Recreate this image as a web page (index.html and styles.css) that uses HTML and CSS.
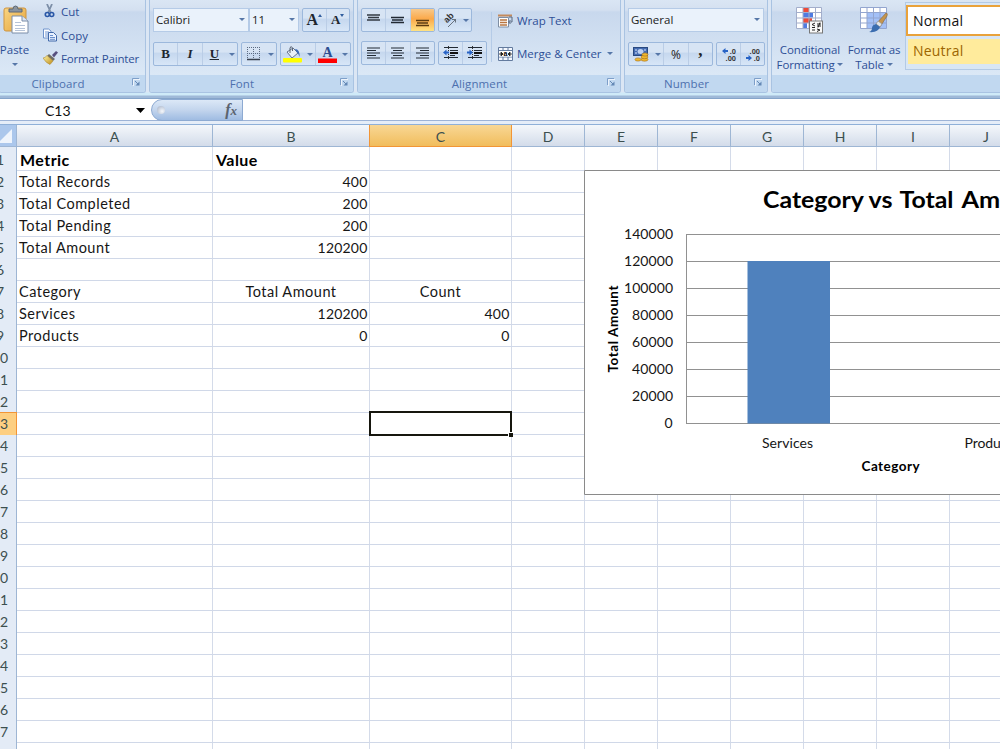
FILE: index.html
```html
<!DOCTYPE html>
<html lang="en">
<head>
<meta charset="utf-8">
<title>Workbook</title>
<link rel="stylesheet" href="styles.css">
</head>
<body>
<svg class="defs" width="0" height="0">
  <defs>
    <symbol id="launch" viewBox="0 0 9 9"><path d="M.5 7V.5H7" fill="none" stroke="#7e9fc9"/><path d="M3 3l3 3" stroke="#6488b5"/><path d="M3.500 7.500h4v-4z" fill="#6488b5"/><path d="M1.500 8V1.500H8" fill="none" stroke="#fff" opacity=".7"/></symbol>
    <linearGradient id="clip" x2="1" y2="1"><stop stop-color="#f9d583"/><stop offset="1" stop-color="#e5a43c"/></linearGradient>
    <linearGradient id="gold" x2="1" y2="1"><stop stop-color="#fff7a8"/><stop offset="1" stop-color="#bd8a18"/></linearGradient>
  </defs>
</svg>
<div class="ribbon">
  <section class="group clipboard">
    <div class="body">
      <div class="paste">
        <svg width="26" height="29" viewBox="0 0 26 29"><rect x="1" y="3" width="22" height="23" rx="2" fill="url(#clip)" stroke="#cf9540"/><path d="M6 7V4h4q0-3 2.500-3t2.500 3h4v3z" fill="#8a949f" stroke="#5e6976"/><path d="M9 11h10l6 5v12H9z" fill="#fff" stroke="#7a8da8"/><path d="M19 11v5h6" fill="#dbe5f3" stroke="#7a8da8"/><path d="M12 17.500h6M12 20.500h10M12 23.500h10M12 25.500h10" stroke="#b5c3d8"/></svg>
        <span>Paste</span><i class="caret"></i>
      </div>
      <div class="commands">
        <div><svg width="14" height="14" viewBox="0 0 14 14"><path d="M4 0l4 9M9 0L5 9" stroke="#7d8fa8" stroke-width="1.800"/><circle cx="4.300" cy="10.500" r="2" fill="none" stroke="#2856a6" stroke-width="1.600"/><circle cx="8.700" cy="10.500" r="2" fill="none" stroke="#2856a6" stroke-width="1.600"/></svg><span>Cut</span></div>
        <div><svg width="14" height="14" viewBox="0 0 14 14"><path d="M.5 1h5l2.500 2v7H.5z" fill="#fff" stroke="#6e93cd"/><path d="M2 4h4M2 6h4M2 8h3" stroke="#7197d4"/><path d="M5.500 4.500h5l3 3v5.500h-8z" fill="#e8f1ff" stroke="#4169aa"/><path d="M7 7.500h3M7 9.500h5M7 11.300h5" stroke="#6a90cc"/></svg><span>Copy</span></div>
        <div><svg width="15" height="14" viewBox="0 0 15 14"><path d="M9 4l4-4 2 1.500-4 5z" fill="#58507f"/><path d="M6 3l6 5-2 2-6-5z" fill="#716e63"/><path d="M4 4.500l6 5.500-3 3.500Q3 12 0 7q2 0 4-2.500z" fill="url(#gold)" stroke="#ac8937" stroke-width=".6"/></svg><span class="painter">Format Painter</span></div>
      </div>
    </div>
    <footer><span>Clipboard</span><svg class="launch"><use href="#launch"/></svg></footer>
  </section>

  <section class="group font">
    <div class="body rows">
      <div class="row">
        <div class="combo name"><span>Calibri</span><i class="caret"></i></div>
        <div class="combo size"><span>11</span><i class="caret"></i></div>
        <div class="set sizes"><b class="serif big">A<i class="up"></i></b><b class="serif">A<i class="down"></i></b></div>
      </div>
      <div class="row second">
        <div class="set biu"><b class="serif">B</b><b class="serif ital">I</b><b class="serif under">U</b><i class="caret"></i></div>
        <div class="set borders"><b><svg width="13" height="14" viewBox="0 0 13 14"><path d="M.5 0v12M6.500 0v12M12.500 0v12M0 .5h13M0 6.500h13" stroke="#5c6b82" stroke-dasharray="1 1"/><path d="M0 12.500h13" stroke="#38424f" stroke-width="1.400"/></svg></b><i class="caret"></i></div>
        <div class="set colors"><b><svg width="19" height="17" viewBox="0 0 19 17"><path d="M4 6l6-4 5 5-6 5z" fill="#e9f0f9" stroke="#66758c"/><path d="M7 7V2q1-3 2.500 0v3" fill="none" stroke="#5b6575"/><path d="M12 3q5 0 4.500 8-1-4-3-5z" fill="#3d6cb8"/><rect y="12" width="19" height="4.600" rx="1" fill="#ff0"/></svg></b><i class="caret"></i><b><svg width="19" height="17" viewBox="0 0 19 17"><text x="9.500" y="11" text-anchor="middle" class="fontcolor">A</text><rect y="12.500" width="19" height="4.500" fill="#f00"/></svg></b><i class="caret"></i></div>
      </div>
    </div>
    <footer><span>Font</span><svg class="launch"><use href="#launch"/></svg></footer>
  </section>

  <section class="group alignment">
    <div class="body">
      <div class="rows">
        <div class="row">
          <div class="set three">
            <b><svg width="13" height="16"><path d="M0 3h13M1 5.500h11M0 8h13" stroke="#333a43" stroke-width="1.300"/></svg></b>
            <b><svg width="13" height="16"><path d="M0 5.500h13M1 8h11M0 10.500h13" stroke="#222a34" stroke-width="1.300"/></svg></b>
            <b class="on"><svg width="13" height="16"><path d="M0 8.500h13M1 11h11M0 13.500h13" stroke="#5a3b12" stroke-width="1.300"/></svg></b>
          </div>
          <div class="set orient"><b><svg width="16" height="16" viewBox="0 0 16 16"><text class="ab" transform="translate(5 11.500) rotate(-45)">ab</text><path d="M6 15l7-7M13.500 7v3.500M10 7.500h4" stroke="#68727e" fill="none"/></svg></b><i class="caret"></i></div>
        </div>
        <div class="row second up1">
          <div class="set three">
            <b><svg width="13" height="12"><path d="M0 1h13M0 3.500h9M0 6h13M0 8.500h9M0 11h13" stroke="#222a34" stroke-width="1.200"/></svg></b>
            <b><svg width="13" height="12"><path d="M0 1h13M2 3.500h9M0 6h13M2 8.500h9M0 11h13" stroke="#222a34" stroke-width="1.200"/></svg></b>
            <b><svg width="13" height="12"><path d="M0 1h13M4 3.500h9M0 6h13M4 8.500h9M0 11h13" stroke="#222a34" stroke-width="1.200"/></svg></b>
          </div>
          <div class="set indent">
            <b><svg width="15" height="14"><path d="M1 1.500h14M7 4.500h8M7 9.500h5M1 11.500h14" stroke="#222a34" stroke-width="1.200"/><path d="M7 7h8" stroke="#111" stroke-width="2"/><path d="M5.500 0v14" stroke="#333" stroke-dasharray="1 1"/><path d="M0 6.500l3.500-3v2H6v2H3.500v2z" fill="#2763c6"/></svg></b>
            <b><svg width="15" height="14"><path d="M1 1.500h14M7 4.500h8M7 9.500h5M1 11.500h14" stroke="#222a34" stroke-width="1.200"/><path d="M7 7h8" stroke="#111" stroke-width="2"/><path d="M5.500 0v14" stroke="#333" stroke-dasharray="1 1"/><path d="M6 6.500l-3.500-3v2H0v2h2.500v2z" fill="#2763c6"/></svg></b>
          </div>
        </div>
      </div>
      <div class="wraps">
        <div><svg width="15" height="14" viewBox="0 0 15 14"><path d="M0 1.500h14" stroke="#c48a5c" stroke-width="2"/><path d="M.5 3.500h10v9.500H.5z" fill="#fff" stroke="#7f8ea4"/><path d="M2 6h7M2 8.500h7M2 11h7" stroke="#b87542" stroke-width="1.300"/><path d="M11 3h3v5h-3M12.500 6l-2 2 2 2" fill="none" stroke="#57677f"/></svg><span>Wrap Text</span></div>
        <div><svg width="15" height="14" viewBox="0 0 15 14"><path d="M.5.5h14v13H.5zM5 .5v3M10 .5v3M5 10v3.500M10 10v3.500M0 3.500h15M0 10h15" fill="#f4f8ff" stroke="#637b9e"/><path d="M1 4h13v5.500H1z" fill="#fff"/><path d="M1 7h4M10 7h4M3 5l2 2-2 2zM12 5l-2 2 2 2z" stroke="#222" fill="#222" stroke-width=".8"/><text x="7.500" y="9" text-anchor="middle" class="tiny">a</text></svg><span>Merge &amp; Center</span><i class="caret"></i></div>
      </div>
    </div>
    <footer><span>Alignment</span><svg class="launch"><use href="#launch"/></svg></footer>
  </section>

  <section class="group number">
    <div class="body rows">
      <div class="row"><div class="combo general"><span>General</span><i class="caret"></i></div></div>
      <div class="row second">
        <div class="set money"><b><svg width="16" height="15" viewBox="0 0 16 15"><rect x=".5" y=".5" width="14" height="8" fill="#446bb1" stroke="#294980"/><ellipse cx="7.500" cy="4.500" rx="3" ry="2.500" fill="#bbd0f2"/><path d="M2 3h2M11 3h2M2 6h2" stroke="#d9e6fc"/><g fill="#efb72e" stroke="#aa721b" stroke-width=".6"><ellipse cx="11.500" cy="12.500" rx="3.500" ry="1.700"/><ellipse cx="11.500" cy="10" rx="3.500" ry="1.700"/><ellipse cx="12" cy="7.500" rx="3" ry="1.600"/><ellipse cx="5" cy="12.500" rx="3" ry="1.600"/></g></svg></b><i class="caret"></i><b class="pct">%</b><b class="comma">,</b></div>
        <div class="set decimals">
          <b><svg width="16" height="15" viewBox="0 0 16 15"><text class="dec" x="15" y="6.500" text-anchor="end">.0</text><text class="dec" x="15" y="14" text-anchor="end">.00</text><path d="M1 4l3.500-3v2H7v2H4.500v2z" fill="#2763c6"/></svg></b>
          <b><svg width="16" height="15" viewBox="0 0 16 15"><text class="dec" x="15" y="6.500" text-anchor="end">.00</text><text class="dec" x="15" y="14" text-anchor="end">.0</text><path d="M7 11l-3.500-3v2H1v2h2.500v2z" fill="#2763c6"/></svg></b>
        </div>
      </div>
    </div>
    <footer><span>Number</span><svg class="launch"><use href="#launch"/></svg></footer>
  </section>

  <section class="group styles">
    <div class="body">
      <div class="large cond">
        <svg width="28" height="27" viewBox="0 0 28 27"><path d="M.5.5h25v21H.5z" fill="#fff"/><path d="M7 .5h6v5H7zM7 11h9v5H7z" fill="#ee4a37"/><path d="M7 5.500h10v5H7zM7 16h4v5.500H7z" fill="#507be0"/><path d="M.5.5h25v21H.5zM7 .5v21M13 .5v21M19.500 .5v21M0 5.500h25M0 11h25M0 16h25" fill="none" stroke="#a3aecb"/><rect x="13.500" y="14" width="13" height="12" fill="#fafafa" stroke="#777"/><path d="M19 16l-3 1.500 3 1.500M16 20.500h3M16 23h3M21 17h4M21 19h4M24 15.500l-2 5M21 22l3 1-3 1.500" fill="none" stroke="#222"/></svg>
        <span>Conditional</span><span>Formatting <i class="caret"></i></span>
      </div>
      <div class="large ftable">
        <svg width="28" height="27" viewBox="0 0 28 27"><path d="M.5.5h26v21H.5z" fill="#fff"/><path d="M7 6h19.500v15.500H7z" fill="#a3c0f7"/><path d="M.5.5h26v21H.5zM7 .5v21M13.500 .5v21M20 .5v21M0 5.500h26M0 11h26M0 16h26" fill="none" stroke="#93a5cf"/><path d="M26 6q2 0 1 3l-7 11-4-3z" fill="#c5954e" stroke="#86673f" stroke-width=".6"/><path d="M18 14l4 3-2 3-4-3z" fill="#e2e5e9" stroke="#858b94" stroke-width=".6"/><path d="M16 17l4 3q-2 6-11 5 3-1 3-4 0-3 4-4z" fill="#3b6db0"/></svg>
        <span>Format as</span><span>Table <i class="caret"></i></span>
      </div>
      <div class="gallery"><div class="normal">Normal</div><div class="neutral">Neutral</div></div>
    </div>
    <footer></footer>
  </section>
</div>

<div class="formula">
  <div class="namebox"><span>C13</span><svg width="9" height="5"><path d="M0 0h9L4.500 5z" fill="#000"/></svg></div>
  <div class="fx"><i class="knob"></i><span>f<small>x</small></span></div>
  <div class="input"></div>
</div>

<main class="sheet">
  <div class="heads">
    <div class="corner"><svg width="16" height="21"><path d="M12 4v14H-2z" fill="#eef4fc"/></svg></div>
    <div>A</div><div>B</div><div class="sel">C</div><div>D</div><div>E</div><div>F</div><div>G</div><div>H</div><div>I</div><div>J</div>
  </div>
  <div class="cells">
    <div class="line first"><i>1</i><strong>Metric</strong><strong>Value</strong></div>
    <div class="line"><i>2</i><span>Total Records</span><span class="r">400</span></div>
    <div class="line"><i>3</i><span>Total Completed</span><span class="r">200</span></div>
    <div class="line"><i>4</i><span>Total Pending</span><span class="r">200</span></div>
    <div class="line"><i>5</i><span>Total Amount</span><span class="r">120200</span></div>
    <div class="line"><i>6</i></div>
    <div class="line"><i>7</i><span>Category</span><span class="c">Total Amount</span><span class="c">Count</span></div>
    <div class="line"><i>8</i><span>Services</span><span class="r">120200</span><span class="r">400</span></div>
    <div class="line"><i>9</i><span>Products</span><span class="r">0</span><span class="r">0</span></div>
    <div class="line"><i>10</i></div>
    <div class="line"><i>11</i></div>
    <div class="line"><i>12</i></div>
    <div class="line"><i class="sel">13</i><div class="active"><b></b></div></div>
    <div class="line"><i>14</i></div>
    <div class="line"><i>15</i></div>
    <div class="line"><i>16</i></div>
    <div class="line"><i>17</i></div>
    <div class="line"><i>18</i></div>
    <div class="line"><i>19</i></div>
    <div class="line"><i>20</i></div>
    <div class="line"><i>21</i></div>
    <div class="line"><i>22</i></div>
    <div class="line"><i>23</i></div>
    <div class="line"><i>24</i></div>
    <div class="line"><i>25</i></div>
    <div class="line"><i>26</i></div>
    <div class="line"><i>27</i></div>
    <div class="line"><i>28</i></div>
  </div>
  <svg class="chart" width="416" height="325" viewBox="584 170 416 325">
    <path d="M1010 170.500H584.500v324H1010" fill="#fff" stroke="#8a8a8a"/>
    <g class="title"><text x="763" y="208" textLength="101" lengthAdjust="spacingAndGlyphs">Category</text><text x="868.500" y="208" textLength="24" lengthAdjust="spacingAndGlyphs">vs</text><text x="899.500" y="208" textLength="54" lengthAdjust="spacingAndGlyphs">Total</text><text x="961.500" y="208" textLength="91" lengthAdjust="spacingAndGlyphs">Amount</text></g>
    <path d="M686 234.500h320M686 261.500h320M686 288.500h320M686 315.500h320M686 342.500h320M686 369.500h320M686 396.500h320M686 423.500h320M686.500 234v190" stroke="#919191"/>
    <rect x="747.500" y="261" width="82.500" height="162.500" fill="#4f81bd"/>
    <g class="axis" text-anchor="end">
      <text x="673" y="239" textLength="49">140000</text><text x="673" y="266" textLength="49">120000</text><text x="673" y="293" textLength="49">100000</text><text x="673" y="320" textLength="41">80000</text><text x="673" y="347" textLength="41">60000</text><text x="673" y="374" textLength="41">40000</text><text x="673" y="401" textLength="41">20000</text><text x="672.500" y="428">0</text>
    </g>
    <g class="axis"><text x="762" y="448" textLength="51">Services</text><text x="964.500" y="448" textLength="54">Products</text></g>
    <text x="861.500" y="471" class="axis bold" textLength="58">Category</text>
    <text transform="translate(618 372.500) rotate(-90)" class="axis bold" textLength="87">Total Amount</text>
  </svg>
</main>
</body>
</html>
```

FILE: styles.css
```css
* { box-sizing: border-box; }
body { margin: 0; width: 1000px; height: 749px; overflow: hidden; background: #fff; font-family: Lato, "Open Sans", sans-serif; }
.defs { position: absolute; }
svg { display: block; flex: none; }
i { font-style: normal; }

.ribbon { display: flex; gap: 3px; height: 99px; overflow: hidden; font: 12px "Open Sans", sans-serif; color: #2e4f96; background: linear-gradient(#dbe6f4 0 92px, #cfeaf8 93px 95px, #9fb9d8 96px 98px, #86a5ca 98px); }
.group { flex: none; height: 93px; display: flex; flex-direction: column; border: solid #a9c3e2; border-width: 0 1px 1px; border-radius: 0 0 3px 3px; overflow: hidden; background: linear-gradient(#dae6f4 0, #d4e0f0 10px, #c8d8ed 12px, #dbe8f6 75px); }
.group .body { height: 75px; flex: none; display: flex; }
.group footer { flex: 1; display: flex; align-items: center; justify-content: center; background: #c1d8f0; color: #4d70ae; font-size: 11.500px; letter-spacing: .1px; padding: 0 4px 0 0; }
.group footer span { flex: 1; text-align: center; padding-right: 6px; }
.launch { width: 9px; height: 9px; margin-bottom: 3px; }
.clipboard { width: 147px; margin-left: -1px; }
.clipboard footer span { padding-right: 16px; }
.font { width: 205px; }
.alignment { width: 264px; }
.number { width: 144px; }
.styles { width: 240px; }

.caret { flex: none; display: inline-block; border: solid transparent; border-width: 3px 3px 0; border-top-color: #5677a8; }
.paste { width: 29px; display: flex; flex-direction: column; align-items: center; padding-top: 5px; }
.paste span { line-height: 16px; margin-top: 8px; font-size: 11.500px; }
.paste .caret { margin-top: 5px; }
.paste svg { margin-left: 3px; }
.commands { padding: 0 0 0 14px; margin-top: -1px; }
.commands div { height: 24px; display: flex; align-items: center; gap: 4px; font-size: 11.500px; }
.commands div:nth-child(3) { gap: 3px; margin-top: -1px; }
.commands .painter { letter-spacing: -.15px; }

.rows { display: flex; flex-direction: column; }
.group .body.rows { padding-left: 3px; flex-direction: column; }
.row { display: flex; gap: 3px; height: 24px; margin-top: 8px; }
.row.second { margin-top: 10px; }
.row.second.up1 { margin-top: 9px; }
.combo { height: 24px; border: 1px solid #b5cbe7; background: #eaf2fb; color: #222; display: flex; align-items: center; justify-content: space-between; padding: 0 3px 1px 2px; font-size: 11.500px; }
.combo.name { width: 96px; margin-right: -3px; }
.combo.size { width: 50px; }
.combo.general { width: 136px; }
.set { height: 24px; display: flex; align-items: center; border: 1px solid #9cb8dc; border-radius: 2px; background: linear-gradient(#d7e4f4 0 42%, #c5d7ee 45%, #d7e6f7); overflow: hidden; }
.set b { flex: 1; height: 100%; display: flex; align-items: center; justify-content: center; border-left: 1px solid #bacde6; }
.set b:first-child { border-left: 0; }
.set > .caret { margin: 0 2px 0 3px; }
.serif { font: bold 13px "Liberation Serif", serif; color: #20262e; }
.serif .up, .serif .down { align-self: flex-start; margin-top: 5px; border: solid transparent; border-width: 0 2px 3px; border-bottom-color: #315e9f; }
.serif .down { border-width: 3px 2px 0; border-top-color: #315e9f; }
.serif.big { font-size: 16px; }
.sizes { width: 48px; }
.biu { width: 85px; }
.biu .ital { font-style: italic; }
.biu .under { text-decoration: underline; }
.borders { width: 36px; }
.colors { width: 71px; }
.fontcolor { font: bold 14px "Liberation Serif", serif; fill: #2c4d90; }
.alignment .rows { padding-left: 3px; }
.three { width: 74px; }
.three .on { background: linear-gradient(#f8c98b, #fba94a 45%, #ffe283); }
.orient { width: 34px; }
.ab { font: bold 9px "Liberation Sans", sans-serif; fill: #333; }
.indent { width: 49px; }
.wraps { margin: 12px 0 0 4px; height: 50px; padding-left: 6px; border-left: 1px solid #b5cbe7; }
.wraps div { height: 17px; display: flex; align-items: center; gap: 4px; white-space: nowrap; font-size: 11.500px; }
.wraps div + div { margin-top: 16px; }
.wraps .caret { margin-left: 1px; }
.tiny { font: bold 7px "Liberation Sans", sans-serif; }
.money { width: 85px; }
.money .pct { font: 12px "Open Sans", sans-serif; color: #222; }
.money .comma { font: bold 17px "Liberation Serif", serif; color: #222; padding-bottom: 6px; }
.decimals { width: 49px; }
.dec { font: bold 7.500px "Liberation Sans", sans-serif; fill: #333; }
.large { flex: none; display: flex; flex-direction: column; align-items: center; padding-top: 7px; line-height: 15px; font-size: 11.500px; letter-spacing: -.1px; white-space: nowrap; }
.large svg + span { margin-top: 8px; }
.large .caret { vertical-align: 3px; }
.cond { width: 76px; }
.ftable { width: 52px; }
.gallery { flex: none; width: 120px; height: 68px; margin: 2px 0 0 5px; border: 1px solid #b3cae5; background: #d8e6f5; padding: 2px 0 0 0; font: 14px "Open Sans", sans-serif; }
.normal { height: 31px; border: 2px solid #e9a23b; background: #fff; color: #111; padding-left: 5px; line-height: 27px; letter-spacing: .2px; }
.neutral { margin: 3px 0 0 2px; height: 25px; background: #ffeb9c; color: #9c6500; padding-left: 5px; line-height: 24px; letter-spacing: .2px; }

.formula { display: flex; height: 26px; background: linear-gradient(#fff 0 21px, #9db3d6 21px 22px, #e5edf8 22px 25px, #8fb0d8 25px); }
.namebox { width: 151px; height: 21px; display: flex; align-items: center; padding: 1px 6px 0 45px; font-size: 14px; justify-content: space-between; color: #111; }
.fx { width: 92px; height: 22px; border: 1px solid #8daad2; border-radius: 11px 0 0 11px; background: linear-gradient(#dce8f7, #c3d5ed 50%, #9fbce2); display: flex; align-items: center; justify-content: space-between; padding: 0 5px; }
.knob { width: 8px; height: 8px; border-radius: 50%; background: radial-gradient(circle at 65% 65%, #f4f7fb, #a4b1c7); }
.fx span { font: italic bold 16px "Liberation Serif", serif; color: #5a636f; }
.fx small { font-size: 13px; }

.sheet { position: relative; height: 624px; overflow: hidden; }
.heads, .line { display: grid; grid-template-columns: 17px 196px 157px 142px 73px 73px 73px 73px 73px 73px 73px; }
.heads { height: 22px; }
.heads div { border: solid #9eb6d4; border-width: 0 1px 1px 0; background: linear-gradient(#f4f7fb, #d3dcea); color: #3c4f4f; text-align: center; font-size: 14px; line-height: 23px; overflow: hidden; }
.heads .corner { background: #abc7ec; }
.heads .sel { background: linear-gradient(#f8d795, #f1bd5c); border-color: #f29536; box-shadow: -1px 0 #f29536; }
.cells { background:
  linear-gradient(#d4dbe9, #d4dbe9) 212px 0 / 1px 100% no-repeat,
  linear-gradient(#d4dbe9, #d4dbe9) 369px 0 / 1px 100% no-repeat,
  linear-gradient(#d4dbe9, #d4dbe9) 511px 0 / 1px 100% no-repeat,
  repeating-linear-gradient(90deg, #d4dbe9 0 1px, transparent 1px 73px) 584px 0 / 438px 100% no-repeat; }
.line { height: 22px; border-bottom: 1px solid #d0d8e8; font-size: 14px; line-height: 22px; color: #161616; }
.line.first { height: 24px; line-height: 25px; }
.line > i { width: 33px; margin: 0 0 -1px -16px; text-align: center; color: #3c4f4f; background: #e3ebf6; border: solid #9eb6d4; border-width: 0 1px 1px 0; font-size: 14px; }
.line > i.sel { background: #fdcf82; border-color: #f29536; box-shadow: 0 -1px #f29536; }
.line span, .line strong { padding: 0 3px 0 2px; white-space: nowrap; font-size: 14.500px; letter-spacing: .5px; }
.line strong { font-size: 16px; letter-spacing: .45px; padding-left: 3px; color: #000; }
.line .r { text-align: right; font-size: 14px; letter-spacing: .2px; padding-right: 2.500px; }
.line .c { text-align: center; }
.active { grid-column: 4; position: relative; margin: -2px 0 -1px -1px; border: 2px solid #16160e; }
.active b { position: absolute; right: -3px; bottom: -3px; width: 5px; height: 5px; background: #16160e; border: solid #fff; border-width: 1px 0 0 1px; }
.chart { position: absolute; left: 584px; top: 45px; }
.title { font: bold 23.500px Lato, sans-serif; }
.axis { font: 14px Lato, sans-serif; fill: #161616; }
.axis.bold { font-weight: bold; font-size: 13.500px; fill: #000; }
```
